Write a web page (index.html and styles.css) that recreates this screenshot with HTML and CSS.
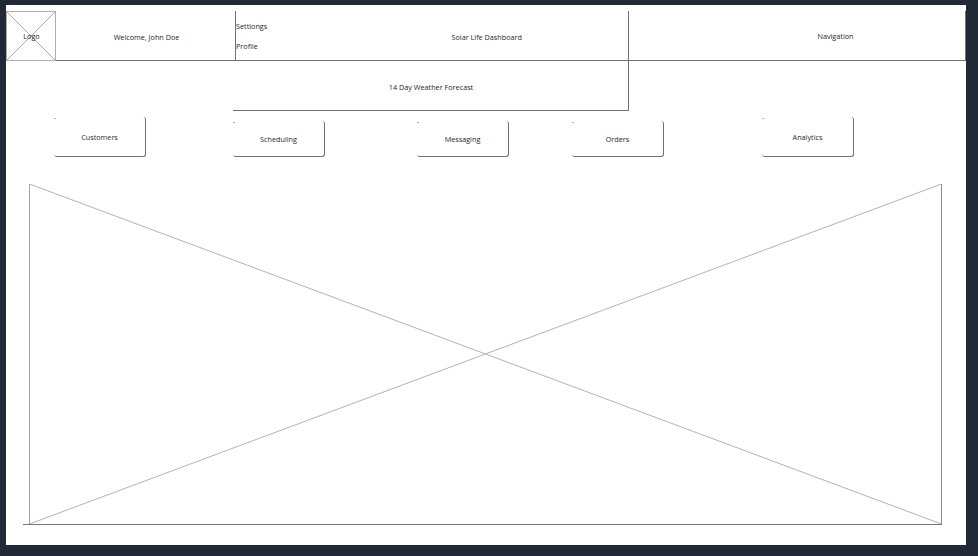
FILE: index.html
```html
<!DOCTYPE html>
<html lang="en">
<head>
<meta charset="utf-8">
<title>Solar Life Dashboard</title>
<link rel="stylesheet" href="styles.css">
</head>
<body>
<main class="page">
  <header class="header">
    <div class="logo">
      <svg class="logo-cross" viewBox="0 0 50 50"><path d="M.5.5h49v49H.5zL49.5 49.5M49.5.5L.5 49.5"/></svg>
      <span>Logo</span>
    </div>
    <div class="welcome"><span>Welcome, John Doe</span></div>
    <div class="brand">
      <nav class="account"><span>Settiongs</span><span>Profile</span></nav>
      <h1 class="title">Solar Life Dashboard</h1>
    </div>
    <nav class="navigation"><span>Navigation</span></nav>
  </header>
  <section class="forecast"><span>14 Day Weather Forecast</span></section>
  <div class="actions">
    <button class="action tall">Customers</button>
    <button class="action">Scheduling</button>
    <button class="action">Messaging</button>
    <button class="action">Orders</button>
    <button class="action tall">Analytics</button>
  </div>
  <section class="content">
    <svg viewBox="0 0 919 341">
      <path class="diagonal" d="M6.5 0L918.5 340M918.5 0L6.5 340"/>
      <path class="left-edge" d="M6.5 0V340"/>
      <path class="right-edge" d="M918.5 0V341"/>
      <path class="bottom-edge" d="M0 340.5H919"/>
    </svg>
  </section>
</main>
</body>
</html>
```
FILE: styles.css
```css
* { box-sizing: border-box; }

body {
  margin: 0;
  height: 556px;
  padding: 5px 12px 11px 6px;
  overflow: hidden;
  background: #202935;
  color: #262626;
  font: 7.25px/10px "Open Sans", "Noto Sans", sans-serif;
}

.page {
  height: 540px;
  padding-top: 6px;
  background: #fff;
}

span, h1, button { white-space: nowrap; }

.header {
  display: grid;
  grid-template-columns: 50px 180px 393px 337px;
  height: 50px;
}

.header > div, .navigation { border-bottom: 1px solid #707174; }

.header > .logo {
  position: relative;
  display: grid;
  place-items: center;
  padding: 0 0 0 1px;
  border: 0;
}

.logo-cross {
  position: absolute;
  inset: 0;
  width: 50px;
  height: 50px;
  fill: none;
  stroke: #989898;
  stroke-width: 0.8;
}

.logo span { position: relative; }

.welcome {
  display: grid;
  place-items: center;
  padding: 3px 0 0 2px;
  border-right: 1px solid #707174;
}

.brand {
  display: grid;
  grid-template-columns: 108px 1fr;
  border-right: 1px solid #707174;
}

.account {
  display: flex;
  flex-direction: column;
  gap: 10px;
  padding-top: 10px;
}

.title {
  margin: 0;
  padding: 21px 0 0 107.5px;
  font: inherit;
}

.navigation {
  display: grid;
  place-items: center;
  padding: 1px 0 0 77px;
  border-right: 1px solid #707174;
}

.forecast {
  display: grid;
  place-items: center;
  width: 396px;
  height: 50px;
  margin-left: 227px;
  padding: 3px 0 0 1px;
  border: solid #707174;
  border-width: 0 1px 1px 0;
}

.actions {
  display: grid;
  grid-template-columns: 179px 184px 155px 190px 92px;
  align-items: end;
  height: 46px;
  margin-left: 48px;
}

.action {
  position: relative;
  width: 92px;
  height: 36px;
  padding: 1px 0 0;
  border: solid #707174;
  border-width: 0 1px 1px 0;
  border-radius: 3px;
  background: none;
  color: inherit;
  font: inherit;
}

.tall { height: 40px; }

.action::before {
  position: absolute;
  top: 1px;
  left: 0;
  width: 2px;
  height: 1px;
  background: #b4b4b6;
  content: "";
}

.content {
  width: 919px;
  height: 341px;
  margin: 27px 0 0 17px;
}

.content svg {
  display: block;
  width: 919px;
  height: 341px;
  fill: none;
}

.diagonal { stroke: #b3b3b3; }
.left-edge { stroke: #a6a6a6; }
.right-edge { stroke: #8b8b8d; }
.bottom-edge { stroke: #77787a; }
```
